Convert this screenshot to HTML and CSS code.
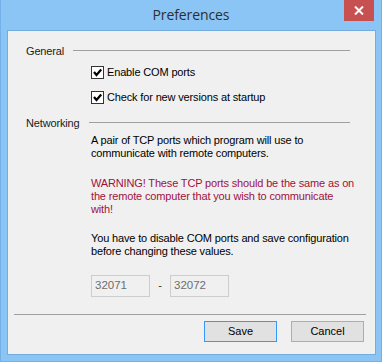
FILE: index.html
```html
<!DOCTYPE html>
<html>
<head>
<meta charset="utf-8">
<link rel="stylesheet" href="styles.css">
</head>
<body>
<div class="window">
  <div class="titlebar">
    <div class="title">Preferences</div>
    <div class="close">
      <svg width="10" height="9" viewBox="0 0 10 9"><path d="M1 0.5 L9 8.5 M9 0.5 L1 8.5" stroke="#fff" stroke-width="2"/></svg>
    </div>
  </div>
  <div class="client">
    <div class="group-head head-general"><span>General</span><i class="rule"></i></div>
    <label class="check first"><span class="box"><svg width="11" height="11" viewBox="0 0 11 11"><path d="M2 5 L4.5 8 L9.2 2.5" fill="none" stroke="#000" stroke-width="2.2"/></svg></span><span>Enable COM ports</span></label>
    <label class="check second"><span class="box"><svg width="11" height="11" viewBox="0 0 11 11"><path d="M2 5 L4.5 8 L9.2 2.5" fill="none" stroke="#000" stroke-width="2.2"/></svg></span><span>Check for new versions at startup</span></label>
    <div class="group-head head-net"><span>Networking</span><i class="rule"></i></div>
    <div class="content">
      <p class="para">A pair of TCP ports which program will use to<br>communicate with remote computers.</p>
      <p class="para warn">WARNING! These TCP ports should be the same as on<br>the remote computer that you wish to communicate<br>with!</p>
      <p class="para">You have to disable COM ports and save configuration<br>before changing these values.</p>
      <div class="ports">
        <div class="input">32071</div>
        <span class="dash">-</span>
        <div class="input">32072</div>
      </div>
    </div>
    <div class="separator"></div>
    <div class="buttons">
      <div class="btn default">Save</div>
      <div class="btn">Cancel</div>
    </div>
  </div>
</div>
</body>
</html>
```
FILE: styles.css
```css
* { box-sizing: border-box; }
html, body { margin: 0; padding: 0; }
body { width: 382px; height: 362px; overflow: hidden; }

.window {
  width: 382px;
  height: 362px;
  background: #8bc5f6;
  box-shadow: inset 1px 0 0 #74b1e6, inset -1px 0 0 #74b1e6, inset 0 -1px 0 #74b1e6;
  display: flex;
  flex-direction: column;
}

.titlebar {
  height: 30px;
  display: grid;
  grid-template-columns: 1fr auto 1fr;
}
.title {
  grid-column: 2;
  font-family: "Open Sans", "Noto Sans", sans-serif;
  font-size: 14px;
  color: #2e2e2e;
  padding-top: 5px;
  letter-spacing: -0.1px;
}
.close {
  grid-column: 3;
  justify-self: end;
  align-self: start;
  width: 30px;
  height: 21px;
  margin-right: 8px;
  background: #c75050;
  display: flex;
  align-items: center;
  justify-content: center;
}

.client {
  flex: 1;
  margin: 0 6px 7px 7px;
  border: 1px solid #74ace0;
  background: #f0f0f0;
  font-family: "Liberation Sans", Arial, sans-serif;
  font-size: 11px;
  line-height: 13px;
  letter-spacing: -0.15px;
  color: #000;
  padding-top: 14px;
  overflow: hidden;
}

.group-head {
  display: flex;
  align-items: flex-start;
  height: 13px;
  padding-left: 18px;
  margin-right: 25px;
  color: #1a1a1a;
}
.group-head .rule {
  flex: 1;
  height: 1px;
  background: #a0a0a0;
  margin-top: 5px;
  margin-left: 9px;
}

.check {
  display: flex;
  align-items: flex-start;
  gap: 3px;
  margin-left: 83px;
  height: 13px;
}
.check.first { margin-top: 8px; }
.check.second { margin-top: 12px; }
.box {
  width: 13px;
  height: 13px;
  border: 1px solid #333;
  background: #fff;
  display: flex;
  align-items: center;
  justify-content: center;
}

.head-net { margin-top: 13px; }

.content {
  margin-left: 83px;
  margin-top: 4px;
}
.para { margin: 0 0 17px 0; }
.para.warn { color: #a0103d; margin-bottom: 16px; }

.ports {
  display: flex;
  align-items: center;
  margin-top: 17px;
  height: 22px;
}
.input {
  width: 59px;
  height: 22px;
  border: 1px solid #cdcdcd;
  background: #f0f0f0;
  color: #6d6d6d;
  padding: 3px 0 0 3px;
  font-size: 11.5px;
  letter-spacing: 0;
}
.dash {
  width: 20px;
  text-align: center;
  color: #333;
  margin-top: -2px;
}

.separator {
  height: 1px;
  background: #a0a0a0;
  margin: 17px 9px 0 6px;
}

.buttons {
  display: flex;
  justify-content: flex-end;
  gap: 14px;
  margin: 6px 11px 0 0;
}
.btn {
  width: 73px;
  height: 21px;
  border: 1px solid #adadad;
  background: #e1e1e1;
  display: flex;
  align-items: center;
  justify-content: center;
  font-size: 11px;
  letter-spacing: 0;
}
.btn.default {
  border-color: #3399ff;
}
```
